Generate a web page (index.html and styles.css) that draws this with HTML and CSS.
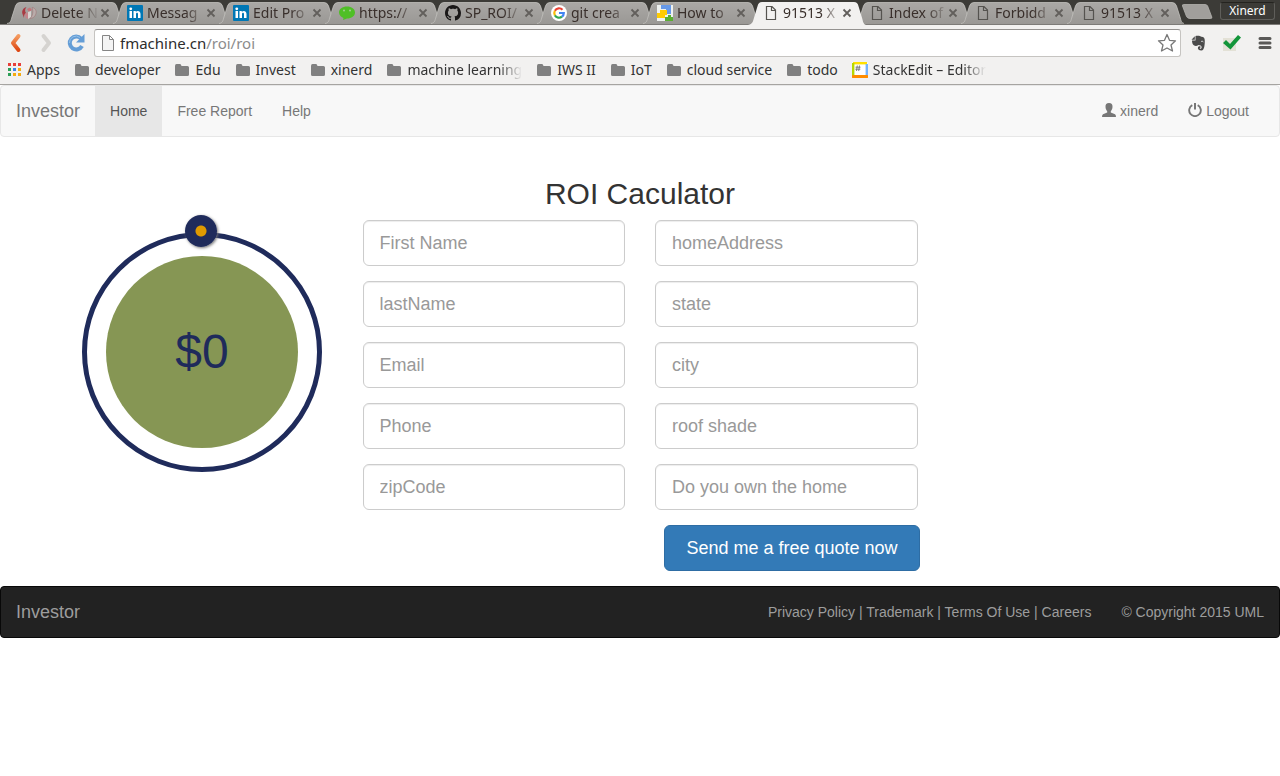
FILE: index.html
```html
<!DOCTYPE html>
<html lang="en">
<head>
<meta charset="utf-8">
<title>ROI Caculator</title>
<link rel="stylesheet" href="styles.css">
</head>
<body>
<svg class="defs" width="0" height="0" aria-hidden="true">
  <defs>
    <linearGradient id="tabfill" x1="0" y1="0" x2="0" y2="1"><stop offset="0" stop-color="#aaa8a5"/><stop offset="1" stop-color="#9a9895"/></linearGradient>
    <linearGradient id="orange" x1="0" y1="0" x2="0" y2="1"><stop offset="0" stop-color="#f49a5e"/><stop offset="1" stop-color="#dd4814"/></linearGradient>
    <symbol id="tab" viewBox="0 0 118 24"><path d="M1 24C5 23 5 20 6 17L9.500 6Q10.500 2.500 14 2.500H106Q109.500 2.500 110.500 6L114 17C115 20 115 23 118 24Z" fill="url(#tabfill)"/><path d="M1 23.500C5 23 5 20 6 17L9.500 6Q10.500 2.500 14 2.500H106Q109.500 2.500 110.500 6L114 17C115 20 115 23 118 23.500" fill="none" stroke="#c2c0bd" stroke-width=".8"/></symbol>
    <symbol id="tab-active" viewBox="0 0 118 24" preserveAspectRatio="none"><path d="M0 24C5 23 5 20 6 17L9.500 6Q10.500 2 14 2H106Q109.500 2 110.500 6L114 17C115 20 115 23 118 24Z" fill="#f2f1f0"/></symbol>
    <symbol id="x" viewBox="0 0 10 10"><path d="M1.500 1.500L8.500 8.500M8.500 1.500L1.500 8.500" stroke="#625f5c" stroke-width="1.800"/></symbol>
    <symbol id="page" viewBox="0 0 16 16"><path d="M3.500 1.500H9L12.500 5V14.500H3.500ZM8.500 1.500V5.500H12.500" fill="none" stroke="#55534f" stroke-width="1.200"/></symbol>
    <symbol id="folder" viewBox="0 0 16 14"><path d="M1 3Q1 1 2.500 1H6Q7 1 7.500 3H13.500Q15 3 15 4.500V11.500Q15 13 13.500 13H2.500Q1 13 1 11.500Z" fill="#808080"/></symbol>
    <symbol id="in" viewBox="0 0 16 16"><rect width="16" height="16" rx="1" fill="#0077b5"/><path d="M2.500 6H5V13H2.500ZM6.500 6H8.800V7C10 5.300 13.500 5.500 13.500 9V13H11V9.300C11 7.300 9 7.400 9 9.300V13H6.500Z" fill="#fff"/><circle cx="3.750" cy="3.800" r="1.400" fill="#fff"/></symbol>
  </defs>
</svg>

<header class="browser">
  <div class="tabstrip">
    <div class="tabs">
      <div class="tab"><svg class="tab-bg"><use href="#tab"/></svg><svg class="favicon" viewBox="0 0 16 16"><path d="M5.500 2C2 3 .5 6 1.500 9L3 13C3 10 3.500 9 5 8C3.500 6 4 4 5.500 2Z" fill="#a93b43"/><path d="M6 4L9 2.500L11 5L8 7Z" fill="#c4747a"/><path d="M4 9L7.500 7V14L4.500 13Z" fill="#c4838a"/><path d="M7 7L10 6V12L7 14Z" fill="#d8d2d0"/><path d="M11 2.500C15 3 16 7 14.500 10C13.500 12 11.500 13.500 9 13.500C12 11 12.500 6 11 2.500Z" fill="#b9adab" stroke="#9c6a6d" stroke-width=".5"/></svg><span class="tab-title">Delete N</span><button class="close" aria-label="Close tab"><svg><use href="#x"/></svg></button></div>
      <div class="tab"><svg class="tab-bg"><use href="#tab"/></svg><svg class="favicon"><use href="#in"/></svg><span class="tab-title">Messag</span><button class="close" aria-label="Close tab"><svg><use href="#x"/></svg></button></div>
      <div class="tab"><svg class="tab-bg"><use href="#tab"/></svg><svg class="favicon"><use href="#in"/></svg><span class="tab-title">Edit Pro</span><button class="close" aria-label="Close tab"><svg><use href="#x"/></svg></button></div>
      <div class="tab"><svg class="tab-bg"><use href="#tab"/></svg><svg class="favicon" viewBox="0 0 16 16"><path d="M8 1.500C12.500 1.500 16 4 16 7.500S12.500 13.500 8 13.500L4 15L4.500 13C2 12 0 10 0 7.500C0 4 3.500 1.500 8 1.500Z" fill="#4fbf26"/><circle cx="5" cy="5.500" r="1" fill="#a2cf92"/><circle cx="11" cy="5.500" r="1" fill="#a2cf92"/></svg><span class="tab-title">https://</span><button class="close" aria-label="Close tab"><svg><use href="#x"/></svg></button></div>
      <div class="tab"><svg class="tab-bg"><use href="#tab"/></svg><svg class="favicon" viewBox="0 0 16 16"><path fill="#191717" d="M8 0C3.580 0 0 3.580 0 8c0 3.540 2.290 6.530 5.470 7.590.4.070.55-.17.55-.38 0-.19-.01-.82-.01-1.490-2.010.37-2.530-.49-2.690-.94-.09-.23-.48-.94-.82-1.130-.28-.15-.68-.52-.01-.53.63-.01 1.080.58 1.230.82.72 1.210 1.870.87 2.330.66.070-.52.280-.87.510-1.070-1.780-.2-3.640-.89-3.640-3.950 0-.87.310-1.590.82-2.150-.08-.2-.36-1.020.08-2.120 0 0 .67-.21 2.200.82.64-.18 1.320-.27 2-.27s1.360.09 2 .27c1.530-1.040 2.200-.82 2.200-.82.44 1.100.16 1.920.08 2.120.51.56.82 1.270.82 2.150 0 3.070-1.870 3.750-3.650 3.950.29.25.54.73.54 1.480 0 1.070-.01 1.930-.01 2.200 0 .21.15.46.55.38A8 8 0 0 0 16 8c0-4.420-3.580-8-8-8z"/></svg><span class="tab-title">SP_ROI/</span><button class="close" aria-label="Close tab"><svg><use href="#x"/></svg></button></div>
      <div class="tab"><svg class="tab-bg"><use href="#tab"/></svg><svg class="favicon" viewBox="0 0 16 16"><circle cx="8" cy="8" r="8" fill="#fff"/><g fill="none" stroke-width="2.200"><path d="M11.500 4.700A4.800 4.800 0 0 0 3.900 5.700" stroke="#ea4335"/><path d="M3.900 5.700A4.800 4.800 0 0 0 3.900 10.400" stroke="#fbbc05"/><path d="M3.900 10.400A4.800 4.800 0 0 0 11 11.700" stroke="#34a853"/><path d="M11 11.700A4.800 4.800 0 0 0 12.800 8H8" stroke="#4285f4"/></g></svg><span class="tab-title">git crea</span><button class="close" aria-label="Close tab"><svg><use href="#x"/></svg></button></div>
      <div class="tab"><svg class="tab-bg"><use href="#tab"/></svg><svg class="favicon" viewBox="0 0 16 16"><path d="M0 0H16V16H0Z" fill="#eef1ef"/><path d="M4 0H14V9H9V4H4Z" fill="#6699e8"/><path d="M3 5H10V10H8V13H0V8H3Z" fill="#fc0"/><path d="M8 12H11V10H14V12H16V16H8Z" fill="#59ae31"/></svg><span class="tab-title">How to</span><button class="close" aria-label="Close tab"><svg><use href="#x"/></svg></button></div>
      <div class="tab tab-current"><svg class="tab-bg"><use href="#tab-active"/></svg><svg class="favicon"><use href="#page"/></svg><span class="tab-title">91513 X</span><button class="close" aria-label="Close tab"><svg><use href="#x"/></svg></button></div>
      <div class="tab"><svg class="tab-bg"><use href="#tab"/></svg><svg class="favicon"><use href="#page"/></svg><span class="tab-title">Index of</span><button class="close" aria-label="Close tab"><svg><use href="#x"/></svg></button></div>
      <div class="tab"><svg class="tab-bg"><use href="#tab"/></svg><svg class="favicon"><use href="#page"/></svg><span class="tab-title">Forbidd</span><button class="close" aria-label="Close tab"><svg><use href="#x"/></svg></button></div>
      <div class="tab"><svg class="tab-bg"><use href="#tab"/></svg><svg class="favicon"><use href="#page"/></svg><span class="tab-title">91513 X</span><button class="close" aria-label="Close tab"><svg><use href="#x"/></svg></button></div>
    </div>
    <button class="new-tab" aria-label="New tab"><svg width="32" height="16" viewBox="0 0 32 16"><path d="M1.500 2Q1 .5 2.500 .5H24Q26 .5 26.600 2L30.800 13Q31.300 14.500 29.500 14.500H9Q6.500 14.500 5.500 12.500Z" fill="#a19f9c" stroke="#b4b2af" stroke-width=".8"/></svg></button>
    <button class="profile">Xinerd</button>
  </div>

  <div class="toolbar">
    <button class="tool" aria-label="Back"><svg width="14" height="20" viewBox="0 0 14 20"><path d="M9.500 3L4 10L9.500 17" fill="none" stroke="url(#orange)" stroke-width="4" stroke-linecap="round" stroke-linejoin="round"/></svg></button>
    <button class="tool" aria-label="Forward"><svg width="14" height="20" viewBox="0 0 14 20"><path d="M4.500 3L10 10L4.500 17" fill="none" stroke="#d5d3d0" stroke-width="4" stroke-linecap="round" stroke-linejoin="round"/></svg></button>
    <button class="tool" aria-label="Reload"><svg width="20" height="20" viewBox="0 0 20 20"><path d="M15 5.500A6.500 6.500 0 1 0 16 13" fill="none" stroke="#649dd6" stroke-width="4"/><path d="M18.500 1V9.500H10Z" fill="#649dd6"/><path d="M14 4.500A6.500 6.500 0 0 0 3.500 10" fill="none" stroke="#94c0e8" stroke-width="1"/></svg></button>
    <div class="omnibox">
      <svg class="page-icon" width="12" height="16" viewBox="0 0 12 16"><path d="M.5 .5H7.500L11.500 4.500V15.500H.5ZM7.500 .5V4.500H11.500" fill="#f4f4f4" stroke="#858585"/></svg>
      <div class="url"><span class="host">fmachine.cn</span>/roi/roi</div>
      <button class="plain" aria-label="Bookmark this page"><svg width="20" height="20" viewBox="0 0 20 20"><path d="M10 1.500L12.500 7.300L18.500 7.800L14 12L15.500 18L10 15L4.500 18L6 12L1.500 7.800L7.500 7.300Z" fill="none" stroke="#787878" stroke-width="1.300" stroke-linejoin="round"/></svg></button>
    </div>
    <div class="extensions">
      <button class="plain" aria-label="Evernote"><svg width="16" height="16" viewBox="0 0 16 16"><path d="M5.500 1C7.500 .3 10.500 .8 11.500 1.800C13.800 2 14.800 3 14.800 6C14.800 9 14.500 15.500 11.500 15.500C8.500 15.500 7.500 14 8 12.300C8.500 11 10 11 10.500 11.500V12.800C9.500 12.500 9.500 13.800 10.500 13.800C12 13.800 12 11 10.500 10.500L8.500 10C6.500 11.500 4 11 3 9.500C2.200 8 2 6.500 2 5.500H5.500Z" fill="#4b4b4b"/><path d="M1.500 4.700L4.800 1.300V4.700Z" fill="#4b4b4b"/><path d="M11 6.700C12 5.800 13 6.200 13.300 7.200" stroke="#ddd" fill="none"/></svg></button>
      <button class="plain" aria-label="Check"><svg width="20" height="18" viewBox="0 0 20 18"><path d="M1 4H14V17H1Z" fill="#e3e1d6"/><path d="M1 9L4 6L8 10L16 1L19 3.500L8.500 15.500Z" fill="#12953a"/></svg></button>
      <button class="plain" aria-label="Menu"><svg width="14" height="14" viewBox="0 0 14 14"><path d="M2 2.500H12M2 7H12M2 11.500H12" stroke="#5a5957" stroke-width="3" stroke-linecap="round"/></svg></button>
    </div>
  </div>

  <nav class="bookmarks" aria-label="Bookmarks">
    <a class="bookmark" href="#"><svg width="14" height="14" viewBox="0 0 14 14"><path d="M0 0h3v3H0zM5 0h3v3H5zM10 0h3v3h-3z" fill="#e8403a"/><path d="M0 5h3v3H0zM0 10h3v3H0z" fill="#2c9f56"/><path d="M5 5h3v3H5z" fill="#3c83ea"/><path d="M10 5h3v3h-3zM5 10h3v3H5zM10 10h3v3h-3z" fill="#f4ab12"/></svg><span>Apps</span></a>
    <a class="bookmark" href="#"><svg width="16" height="14"><use href="#folder"/></svg><span>developer</span></a>
    <a class="bookmark" href="#"><svg width="16" height="14"><use href="#folder"/></svg><span>Edu</span></a>
    <a class="bookmark" href="#"><svg width="16" height="14"><use href="#folder"/></svg><span>Invest</span></a>
    <a class="bookmark" href="#"><svg width="16" height="14"><use href="#folder"/></svg><span>xinerd</span></a>
    <a class="bookmark" href="#"><svg width="16" height="14"><use href="#folder"/></svg><span class="clipped">machine learning</span></a>
    <a class="bookmark" href="#"><svg width="16" height="14"><use href="#folder"/></svg><span>IWS II</span></a>
    <a class="bookmark" href="#"><svg width="16" height="14"><use href="#folder"/></svg><span>IoT</span></a>
    <a class="bookmark" href="#"><svg width="16" height="14"><use href="#folder"/></svg><span>cloud service</span></a>
    <a class="bookmark" href="#"><svg width="16" height="14"><use href="#folder"/></svg><span>todo</span></a>
    <a class="bookmark" href="#"><svg width="16" height="16" viewBox="0 0 16 16"><rect width="16" height="16" rx="2" fill="#fff"/><path d="M1 1.200H15" stroke="#ffe000" stroke-width="2.400"/><path d="M1.200 1V14" stroke="#b6d800" stroke-width="2.400"/><path d="M14.800 2V14" stroke="#74b4ff" stroke-width="2.400"/><path d="M1 14.500H15" stroke="#ff8c00" stroke-width="3" stroke-linecap="round"/><path d="M5.300 3.500L4.500 9M7.500 3.500L6.700 9M3.500 5.200H8.500M3.300 7.200H8.300" stroke="#666" stroke-width=".8"/></svg><span class="clipped">StackEdit – Editor</span></a>
  </nav>
</header>

<nav class="navbar">
  <a class="brand" href="#">Investor</a>
  <a class="nav-link nav-current" href="#">Home</a>
  <a class="nav-link" href="#">Free Report</a>
  <a class="nav-link" href="#">Help</a>
  <div class="nav-right">
    <a class="nav-link" href="#"><svg class="glyph" viewBox="0 0 14 14"><path d="M7 0C9.500 0 10.700 1.500 10.500 4C10.400 6 9.500 7.500 8.800 8.300V9.500L13 11.300Q14 11.800 14 14H0Q0 11.800 1 11.300L5.200 9.500V8.300C4.500 7.500 3.600 6 3.500 4C3.300 1.500 4.500 0 7 0Z" fill="#777"/></svg> xinerd</a>
    <a class="nav-link" href="#"><svg class="glyph" viewBox="0 0 14 14"><path d="M4.300 2.200A5.800 5.800 0 1 0 9.700 2.200" fill="none" stroke="#777" stroke-width="1.900"/><path d="M7 0V6.500" stroke="#777" stroke-width="2"/></svg> Logout</a>
  </div>
</nav>

<main class="container">
  <h2 class="heading">ROI Caculator</h2>
  <form class="row">
    <div class="dial-cell">
      <div class="dial">
        <input class="dial-angle" type="range" min="-180" max="180" value="0" aria-label="Amount">
        <output class="dial-value">$0</output>
      </div>
    </div>
    <div class="fields">
      <input class="field" type="text" placeholder="First Name" aria-label="First Name">
      <input class="field" type="text" placeholder="homeAddress" aria-label="homeAddress">
      <input class="field" type="text" placeholder="lastName" aria-label="lastName">
      <input class="field" type="text" placeholder="state" aria-label="state">
      <input class="field" type="text" placeholder="Email" aria-label="Email">
      <input class="field" type="text" placeholder="city" aria-label="city">
      <input class="field" type="text" placeholder="Phone" aria-label="Phone">
      <input class="field" type="text" placeholder="roof shade" aria-label="roof shade">
      <input class="field" type="text" placeholder="zipCode" aria-label="zipCode">
      <input class="field" type="text" placeholder="Do you own the home" aria-label="Do you own the home">
      <button class="submit" type="button">Send me a free quote now</button>
    </div>
  </form>
</main>

<footer class="footer">
  <a class="brand" href="#">Investor</a>
  <div class="footer-right">
    <p><a href="#">Privacy Policy</a> | <a href="#">Trademark</a> | <a href="#">Terms Of Use</a> | <a href="#">Careers</a></p>
    <p>© Copyright 2015 UML</p>
  </div>
</footer>
</body>
</html>
```

FILE: styles.css
```css
* { box-sizing: border-box; }

body {
  margin: 0;
  background: #fff;
  color: #333;
  font: 14px/20px "Liberation Sans", Arial, sans-serif;
}

a { color: inherit; text-decoration: none; }
button { border: 0; margin: 0; padding: 0; background: none; color: inherit; font: inherit; cursor: pointer; }
svg { display: block; flex: none; }
.defs { position: absolute; }

/* Browser window */
.browser {
  border-bottom: 1px solid #a6a4a1;
  background: #f2f1f0;
  color: #333;
  font-family: "Noto Sans", "Open Sans", sans-serif;
}

.tabstrip {
  display: flex;
  height: 25px;
  padding-left: 6px;
  padding-right: 5px;
  background: #3c3b37;
  border-bottom: 1px solid #7d7b78;
}
.tabs { display: flex; padding-right: 12px; }
.tab {
  position: relative;
  display: flex;
  align-items: center;
  width: 118px;
  height: 24px;
  margin-right: -12px;
  padding: 2px 14px 0 15px;
  color: #392f2b;
}
.tab-current { z-index: 1; height: 25px; padding-bottom: 1px; }
.tab-bg { position: absolute; inset: 0; width: 100%; height: 100%; }
.favicon { position: relative; width: 16px; height: 16px; margin-right: 4px; }
.tab-title {
  position: relative;
  flex: 1;
  white-space: nowrap;
  mask-image: linear-gradient(to right, #000 64%, transparent);
}
.close { position: relative; }
.close svg { width: 10px; height: 10px; }
.new-tab { align-self: center; margin-left: -3px; }
.profile {
  align-self: flex-start;
  width: 55px;
  margin: 2px 0 0 auto;
  border: 1px solid #5f5e5a;
  border-top-color: #24231f;
  border-radius: 3px;
  color: #fff;
  font-size: 12px;
  line-height: 16px;
}

.toolbar { display: flex; align-items: center; height: 31px; padding: 4px 8px 0 1px; }
.tool { display: grid; place-items: center; width: 30px; }
.omnibox {
  display: flex;
  flex: 1;
  align-items: center;
  height: 28px;
  margin: 0 9px 0 3px;
  padding: 0 3px 0 7px;
  border: 1px solid #c6c4c1;
  border-top-color: #949290;
  border-radius: 3px;
  background: #fff;
}
.url { flex: 1; padding-left: 6px; color: #8c8c8c; font-size: 15px; }
.host { color: #2d2d2d; }
.extensions { display: flex; align-items: center; gap: 16px; }

.bookmarks { display: flex; align-items: center; gap: 14px; height: 28px; padding-left: 8px; }
.bookmark { display: flex; align-items: center; gap: 5px; white-space: nowrap; }
.clipped { max-width: 118px; mask-image: linear-gradient(to right, #000 80%, transparent); }

/* Site header */
.navbar {
  display: flex;
  min-height: 52px;
  margin-bottom: 20px;
  padding-right: 15px;
  border: 1px solid #e7e7e7;
  border-radius: 4px;
  background: #f8f8f8;
  color: #777;
}
.brand { padding: 15px; font-size: 18px; }
.nav-link { display: flex; gap: 4px; padding: 15px; }
.nav-current { background: #e7e7e7; color: #555; }
.nav-right { display: flex; margin-left: auto; }
.glyph { width: 14px; height: 14px; margin-top: 2px; }

/* Calculator */
.container { max-width: 1170px; margin: 0 auto; }
.heading { margin: 0 0 10px; padding-top: 20px; font-size: 30px; font-weight: 500; line-height: 33px; text-align: center; }
.row { display: grid; grid-template-columns: minmax(0, 1fr) minmax(0, 2fr) minmax(0, 1fr); }
.dial-cell { padding: 12px 27px; }
.dial {
  position: relative;
  display: grid;
  place-items: center;
  width: 240px;
  height: 240px;
  border: 5px solid #1f2b5b;
  border-radius: 50%;
}
.dial-value {
  display: grid;
  place-items: center;
  width: 192px;
  height: 192px;
  border-radius: 50%;
  background: #869654;
  color: #1f2b5b;
  font-size: 48px;
}
.dial-angle {
  position: absolute;
  top: -22px;
  left: -6px;
  width: 240px;
  height: 32px;
  margin: 0;
  appearance: none;
  background: none;
}
.dial-angle::-webkit-slider-thumb {
  appearance: none;
  width: 32px;
  height: 32px;
  border-radius: 50%;
  background: radial-gradient(circle, #df9a00 5px, #1f2b5b 6px);
  box-shadow: 1px 1px 3px #777;
}
.fields {
  display: grid;
  grid-template-columns: minmax(0, 1fr) minmax(0, 1fr);
  gap: 15px 30px;
  padding: 0 15px;
}
.field {
  width: 100%;
  height: 46px;
  padding: 10px 16px;
  border: 1px solid #ccc;
  border-radius: 6px;
  background: #fff;
  box-shadow: inset 0 1px 1px rgba(0, 0, 0, 0.075);
  color: #555;
  font: 18px/24px "Liberation Sans", Arial, sans-serif;
}
.field::placeholder { color: #999; opacity: 1; }
.submit {
  grid-column: 2;
  width: 256px;
  height: 46px;
  margin-left: 9px;
  border: 1px solid #2e6da4;
  border-radius: 6px;
  background: #337ab7;
  color: #fff;
  font-size: 18px;
}

/* Footer */
.footer {
  display: flex;
  min-height: 52px;
  margin-top: 15px;
  border: 1px solid #080808;
  border-radius: 4px;
  background: #222;
  color: #9d9d9d;
}
.footer-right { display: flex; gap: 30px; margin-left: auto; padding: 15px; }
.footer-right p { margin: 0; }
```
